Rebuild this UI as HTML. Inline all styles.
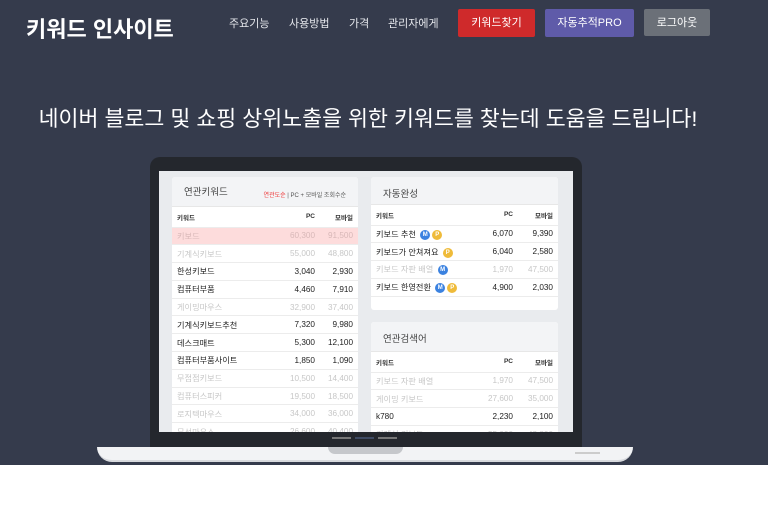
<!DOCTYPE html>
<html><head><meta charset="utf-8"><style>
*{margin:0;padding:0;box-sizing:border-box}
body{width:768px;height:510px;overflow:hidden;background:#fff;font-family:"Liberation Sans","Noto Sans CJK KR",sans-serif;position:relative}
.hero{position:absolute;left:0;top:0;width:768px;height:465px;background:#353b4c}
.logo{position:absolute;left:26px;top:12px;color:#fff;font-size:22px;font-weight:bold}
.nav{position:absolute;top:15px;color:#e5e7ec;font-size:11px}
.btn{position:absolute;top:9px;height:28px;color:#fff;font-size:11px;line-height:28px;text-align:center;border-radius:2px}
h1{position:absolute;left:27px;width:682px;top:102px;text-align:center;color:#fff;font-size:21.7px;font-weight:normal;white-space:nowrap}
.bezel{position:absolute;left:150px;top:157px;width:432px;height:291px;background:#24272d;border-radius:10px 10px 0 0}
.screen{position:absolute;left:159px;top:171px;width:414px;height:261px;background:#e9ebee;overflow:hidden}
.base{position:absolute;left:97px;top:447px;width:536px;height:15px;background:#f2f3f5;border-radius:0 0 30px 30px;border-bottom:2px solid #d7d9dd}
.notch{position:absolute;left:328px;top:447px;width:75px;height:7px;background:#c5c7cb;border-radius:0 0 8px 8px}
.panel{position:absolute;background:#fff;border-radius:3px;overflow:hidden}
.ph{background:#f3f4f6;height:28px;font-size:9.5px;color:#444;padding:9px 12px;border-bottom:1px solid #e7e7e7}
table{width:100%;border-collapse:collapse;font-size:8.2px;table-layout:fixed}
td{height:17.8px;border-bottom:1px solid #ececec;padding:0 5px;color:#222;white-space:nowrap;overflow:visible}
td.n{text-align:right}
tr.h td{font-size:6.5px;height:20px;font-weight:bold;color:#333}
tr.g td{color:#c7c7c7}
tr.r td{background:#fddcdc;color:#d8b8b8}
.b{display:inline-block;width:10px;height:10px;border-radius:50%;color:#fff;font-size:6px;text-align:center;line-height:10px;font-weight:bold;vertical-align:middle;margin-left:2px}
.m{background:#3b82e0}.p{background:#efbb3a}
</style></head><body>
<div class="hero">
<div class="logo">키워드 인사이트</div>
<div class="nav" style="left:229px">주요기능</div>
<div class="nav" style="left:289px">사용방법</div>
<div class="nav" style="left:349px">가격</div>
<div class="nav" style="left:388px">관리자에게</div>
<div class="btn" style="left:458px;width:77px;background:#cf2a2b">키워드찾기</div>
<div class="btn" style="left:545px;width:89px;background:#5f5ba9">자동추적PRO</div>
<div class="btn" style="left:644px;width:66px;height:27px;background:#6b7078">로그아웃</div>
<h1>네이버 블로그 및 쇼핑 상위노출을 위한 키워드를 찾는데 도움을 드립니다!</h1>
<div class="bezel"></div>
<div class="screen">
<div class="panel" style="left:13px;top:6px;width:186px;height:270px">
<div class="ph" style="height:30px;padding-top:7px">연관키워드 <span style="float:right;font-size:6px;margin-top:6px;color:#555"><span style="color:#e33">연관도순</span> | PC + 모바일 조회수순</span></div>
<table><colgroup><col><col style="width:50px"><col style="width:38px"></colgroup>
<tr class="h"><td>키워드</td><td class="n">PC</td><td class="n">모바일</td></tr>
<tr class="r"><td>키보드</td><td class="n">60,300</td><td class="n">91,500</td></tr>
<tr class="g"><td>기계식키보드</td><td class="n">55,000</td><td class="n">48,800</td></tr>
<tr><td>한성키보드</td><td class="n">3,040</td><td class="n">2,930</td></tr>
<tr><td>컴퓨터부품</td><td class="n">4,460</td><td class="n">7,910</td></tr>
<tr class="g"><td>게이밍마우스</td><td class="n">32,900</td><td class="n">37,400</td></tr>
<tr><td>기계식키보드추천</td><td class="n">7,320</td><td class="n">9,980</td></tr>
<tr><td>데스크매트</td><td class="n">5,300</td><td class="n">12,100</td></tr>
<tr><td>컴퓨터부품사이트</td><td class="n">1,850</td><td class="n">1,090</td></tr>
<tr class="g"><td>무접점키보드</td><td class="n">10,500</td><td class="n">14,400</td></tr>
<tr class="g"><td>컴퓨터스피커</td><td class="n">19,500</td><td class="n">18,500</td></tr>
<tr class="g"><td>로지텍마우스</td><td class="n">34,000</td><td class="n">36,000</td></tr>
<tr class="g"><td>무선마우스</td><td class="n">26,600</td><td class="n">40,400</td></tr>
</table></div>
<div class="panel" style="left:212px;top:6px;width:187px;height:133px">
<div class="ph">자동완성</div>
<table><colgroup><col><col style="width:45px"><col style="width:40px"></colgroup>
<tr class="h"><td>키워드</td><td class="n">PC</td><td class="n">모바일</td></tr>
<tr><td>키보드 추천 <span class="b m">M</span><span class="b p">P</span></td><td class="n">6,070</td><td class="n">9,390</td></tr>
<tr><td>키보드가 안쳐져요 <span class="b p">P</span></td><td class="n">6,040</td><td class="n">2,580</td></tr>
<tr class="g"><td>키보드 자판 배열 <span class="b m">M</span></td><td class="n">1,970</td><td class="n">47,500</td></tr>
<tr><td>키보드 한영전환 <span class="b m">M</span><span class="b p">P</span></td><td class="n">4,900</td><td class="n">2,030</td></tr>
</table></div>
<div class="panel" style="left:212px;top:151px;width:187px;height:130px">
<div class="ph" style="height:30px">연관검색어</div>
<table><colgroup><col><col style="width:45px"><col style="width:40px"></colgroup>
<tr class="h"><td>키워드</td><td class="n">PC</td><td class="n">모바일</td></tr>
<tr class="g"><td>키보드 자판 배열</td><td class="n">1,970</td><td class="n">47,500</td></tr>
<tr class="g"><td>게이밍 키보드</td><td class="n">27,600</td><td class="n">35,000</td></tr>
<tr><td>k780</td><td class="n">2,230</td><td class="n">2,100</td></tr>
<tr class="g"><td>기계식 키보드</td><td class="n">55,000</td><td class="n">48,800</td></tr>
</table></div>
</div>
<div style="position:absolute;left:332px;top:437px;width:19px;height:2px;background:#777"></div>
<div style="position:absolute;left:355px;top:437px;width:19px;height:2px;background:#3e4a63"></div>
<div style="position:absolute;left:378px;top:437px;width:19px;height:2px;background:#777"></div>
</div>
<div class="base"></div>
<div class="notch"></div>
<div style="position:absolute;left:575px;top:452px;width:25px;height:2px;background:#ccc"></div>
</body></html>
